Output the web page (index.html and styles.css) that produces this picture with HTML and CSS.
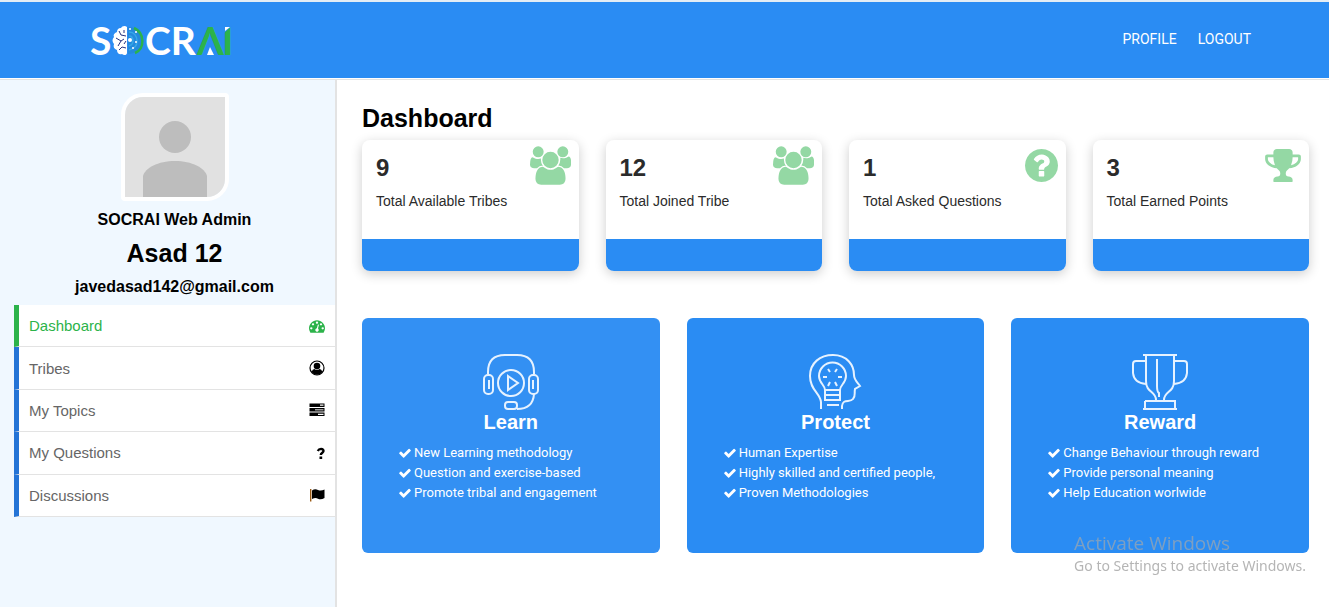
FILE: index.html
```html
<!DOCTYPE html>
<html lang="en">
<head>
<meta charset="utf-8">
<title>SOCRAI Dashboard</title>
<meta name="viewport" content="width=device-width, initial-scale=1">
<link rel="stylesheet" href="styles.css">
</head>
<body>
<svg class="sprite" aria-hidden="true">
  <symbol id="users" viewBox="-64 0 1920 1792"><path d="M529 896q-162 5-265 128h-134q-82 0-138-40.500t-56-118.500q0-353 124-353 6 0 43.500 21t97.500 42.500 119 21.500q67 0 133-23-5 37-5 66 0 159 93 292zm1071 637q0 120-73 189.500t-194 69.500h-874q-121 0-194-69.500t-73-189.500q0-53 3.500-103.500t14-109 26.500-108.500 43-97.500 62-81 85.500-53.500 111.500-20q10 0 43 21.500t73 48 107 48 135 21.500 135-21.500 107-48 73-48 43-21.500q61 0 111.500 20t85.500 53.500 62 81 43 97.500 26.500 108.500 14 109 3.500 103.500zm-1024-1277q0 106-75 181t-181 75-181-75-75-181 75-181 181-75 181 75 75 181zm704 384q0 159-112.500 271.500t-271.500 112.500-271.500-112.500-112.500-271.500 112.500-271.500 271.500-112.500 271.500 112.500 112.500 271.500zm576 225q0 78-56 118.500t-138 40.500h-134q-103-123-265-128 93-133 93-292 0-29-5-66 66 23 133 23 59 0 119-21.500t97.500-42.500 43.500-21q124 0 124 353zm-128-609q0 106-75 181t-181 75-181-75-75-181 75-181 181-75 181 75 75 181z"/></symbol>
  <symbol id="question-circle" viewBox="128 128 1536 1536"><path d="M1024 1376v-192q0-14-9-23t-23-9h-192q-14 0-23 9t-9 23v192q0 14 9 23t23 9h192q14 0 23-9t9-23zm256-672q0-88-55.500-163t-138.500-116-170-41q-243 0-371 213-15 24 8 42l132 100q7 6 19 6 16 0 25-12 53-68 86-92 34-24 86-24 48 0 85.500 26t37.500 59q0 38-20 61t-68 45q-63 28-115.500 86.500t-52.500 125.500v36q0 14 9 23t23 9h192q14 0 23-9t9-23q0-19 21.500-49.500t54.500-49.500q32-18 49-28.500t46-35 44.500-48 28-60.500 12.500-81zm384 192q0 209-103 385.500t-279.500 279.500-385.500 103-385.500-103-279.500-279.500-103-385.500 103-385.500 279.500-279.500 385.500-103 385.500 103 279.500 279.500 103 385.500z"/></symbol>
  <symbol id="trophy" viewBox="64 128 1664 1536"><path d="M522 883q-74-162-74-371h-256v96q0 78 94.500 162t235.500 113zm1078-275v-96h-256q0 209-74 371 141-29 235.500-113t94.500-162zm128-128v128q0 71-41.500 143t-112 130-173 97.500-215.500 44.500q-42 54-95 95-38 34-52.500 72.500t-14.500 89.500q0 54 30.500 91t97.500 37q75 0 133.500 45.500t58.500 114.500v64q0 14-9 23t-23 9h-832q-14 0-23-9t-9-23v-64q0-69 58.500-114.500t133.500-45.500q67 0 97.500-37t30.500-91q0-51-14.500-89.500t-52.500-72.500q-53-41-95-95-113-5-215.500-44.500t-173-97.500-112-130-41.500-143v-128q0-40 28-68t68-28h288v-96q0-66 47-113t113-47h576q66 0 113 47t47 113v96h288q40 0 68 28t28 68z"/></symbol>
  <symbol id="check" viewBox="100 100 1592 1592"><path d="M1671 566q0 40-28 68l-724 724-136 136q-28 28-68 28t-68-28l-136-136-362-362q-28-28-28-68t28-68l136-136q28-28 68-28t68 28l294 295 656-657q28-28 68-28t68 28l136 136q28 28 28 68z"/></symbol>
  <symbol id="gauge" viewBox="0 0 1792 1792"><path d="M384 1152q0-53-37.500-90.500t-90.500-37.500-90.500 37.500-37.500 90.500 37.500 90.500 90.500 37.500 90.500-37.500 37.500-90.500zm192-448q0-53-37.500-90.500t-90.500-37.500-90.500 37.500-37.500 90.500 37.500 90.500 90.500 37.500 90.500-37.500 37.500-90.500zm428 481l101-382q6-26-7.500-48.500t-38.500-29.500-48 6.500-30 39.500l-101 382q-60 5-107 43.500t-63 98.500q-20 77 20 146t117 89 146-20 89-117q16-60-6-117t-72-91zm660-33q0-53-37.500-90.500t-90.500-37.500-90.500 37.500-37.500 90.500 37.500 90.500 90.500 37.500 90.500-37.500 37.500-90.500zm-640-640q0-53-37.500-90.500t-90.500-37.500-90.500 37.500-37.500 90.500 37.500 90.500 90.500 37.500 90.500-37.500 37.500-90.500zm448 192q0-53-37.500-90.500t-90.500-37.500-90.500 37.500-37.500 90.500 37.500 90.500 90.500 37.500 90.500-37.500 37.500-90.500zm320 448q0 261-141 483-19 29-54 29h-1402q-35 0-54-29-141-221-141-483 0-182 71-348t191-286 286-191 348-71 348 71 286 191 191 286 71 348z"/></symbol>
</svg>

<header class="topbar">
  <a class="brand" href="#" aria-label="SOCRAI">
    <svg class="logo" viewBox="0 -13 146 54" aria-hidden="true">
      <text class="logo-text" x="-1" y="30">S</text>
      <g transform="translate(-1 -1)">
      <path fill="#fff" d="M37 3c-2-2-5-1-6 1-3 0-4 2-4 4-3 1-4 3-3 5-2 2-2 5 0 7-1 3 0 5 3 6 0 3 2 5 5 4 2 2 5 1 5-1z"/>
      <path fill="none" stroke="#28327f" stroke-width="1" d="M29 7l2 4 5 1M26 14l5 3 3-2M31 17l-3 5M29 26l3-3 4 1M34 6v3M36 17l-2 3"/>
      <path fill="#2489dc" d="M38 3c9 0 14 6 14 14s-6 13-14 13z"/>
      <path fill="none" stroke="#35a8e8" stroke-width="1.500" d="M39 8c5 0 8 4 8 9s-3 8-8 9M39 12c3 0 4 2 4 5s-1 4-4 5"/>
      <path fill="none" stroke="#2cb34a" stroke-width="2.500" d="M44 4c11 5 11 21 1 25"/>
      <g fill="#fff"><circle cx="40" cy="16" r="2"/><circle cx="46" cy="8" r="1"/><circle cx="46" cy="18" r="1"/><circle cx="43" cy="24" r="1"/><circle cx="40" cy="5" r="1"/></g>
      </g>
      <text class="logo-text" x="54" y="30">CR</text>
      <text class="logo-text logo-green" x="106" y="30">Λ</text>
      <path fill="#fff" d="M119 22l4 8h-7z"/>
      <text class="logo-text logo-green" x="131" y="30">I</text>
      <path fill="#2a8cf3" d="M133 1h8l-8 7z"/>
      <path fill="#fff" d="M134 2h5l-5 4z"/>
    </svg>
  </a>
  <nav class="topnav"><a href="#">PROFILE</a><a href="#">LOGOUT</a></nav>
</header>

<div class="layout">
  <aside class="sidebar">
    <svg class="avatar" viewBox="0 0 100 100" role="img" aria-label="Profile picture">
      <rect width="100" height="100" fill="#e1e1e1"/><circle cx="50" cy="40" r="16" fill="#bdbdbd"/>
      <path fill="#bdbdbd" d="M18 100V79c2-8 15-15 32-15s30 7 32 15v21z"/>
    </svg>
    <p class="role">SOCRAI Web Admin</p>
    <h2 class="name">Asad 12</h2>
    <p class="email">javedasad142@gmail.com</p>
    <nav class="menu">
      <a class="active" href="#">Dashboard<svg class="icon"><use href="#gauge"/></svg></a>
      <a href="#">Tribes<svg class="icon" viewBox="0 0 16 16"><circle cx="8" cy="8" r="7" fill="none" stroke="currentColor" stroke-width="1.200"/><circle cx="8" cy="6" r="3.300"/><path d="M2.500 12Q3.500 9 5.500 9q2.500 1.700 5 0 2 0 3 3-2 2.800-5.500 2.800T2.500 12z"/></svg></a>
      <a href="#">My Topics<svg class="icon" viewBox="0 0 16 16"><path fill-rule="evenodd" d="M.5 1.500h15v3.500H.5zM11 2.600v1.200h3.500V2.600zM.5 10.500h15V14H.5zM9 11.700v1.200h5.500v-1.200z"/><path d="M.5 6h15v3.500H.5z"/><path fill="#999" d="M6 7h8.500v1.500H6z"/></svg></a>
      <a href="#">My Questions<svg class="icon" viewBox="0 0 16 16"><path fill="none" stroke="currentColor" stroke-width="2.400" d="M8.800 6Q9.800 3.900 12 3.900q2.500.2 2.500 2.200c0 1.700-2.700 1.600-2.700 4"/><path d="M10.500 11.500h2.700V14h-2.700z"/></svg></a>
      <a href="#">Discussions<svg class="icon" viewBox="0 0 16 16"><path d="M3 3.500Q6 1.500 9 3q3 1.300 6.500-.5V11q-3.500 2-6.500.7-2.500-1.500-6 .3z"/><path fill="#9b5b16" d="M1 2h1.400v12.500H1z"/></svg></a>
    </nav>
  </aside>

  <main class="content">
    <h1>Dashboard</h1>
    <section class="stats" aria-label="Totals">
      <article class="stat"><strong>9</strong><p>Total Available Tribes</p><svg class="stat-icon wide"><use href="#users"/></svg></article>
      <article class="stat"><strong>12</strong><p>Total Joined Tribe</p><svg class="stat-icon wide"><use href="#users"/></svg></article>
      <article class="stat"><strong>1</strong><p>Total Asked Questions</p><svg class="stat-icon"><use href="#question-circle"/></svg></article>
      <article class="stat"><strong>3</strong><p>Total Earned Points</p><svg class="stat-icon cup"><use href="#trophy"/></svg></article>
    </section>
    <section class="features">
      <article class="feature learn">
        <svg class="art" viewBox="0 0 56 56"><path d="M5 20V18Q5 1 22 1H34Q51 1 51 18v2M51 40Q50 55 34 55"/><rect x="1" y="21" width="9" height="19" rx="4"/><rect x="46" y="21" width="9" height="19" rx="4"/><path d="M6 26v9M50 26v9"/><circle cx="28" cy="29" r="13"/><path d="M25 22l10 7-10 7z"/><rect x="22" y="48" width="12" height="7" rx="3"/></svg>
        <h2>Learn</h2>
        <ul><li><svg><use href="#check"/></svg>New Learning methodology</li><li><svg><use href="#check"/></svg>Question and exercise-based</li><li><svg><use href="#check"/></svg>Promote tribal and engagement</li></ul>
      </article>
      <article class="feature">
        <svg class="art" viewBox="0 0 56 56"><path d="M14 55V48C13 39 3 36 3 22 3 9 13 1 26 1c14 0 21 10 21 20 0 5 4 8 6 11l-5 3c-1 4 1 7-2 10-3 4-10-1-11 7v3M18 36c0-5-6-7-6-14a13 13 0 0 1 27 0c0 7-6 9-6 14z"/><path d="M18 36h15v5H18zM18 41h15v5H18zM20 51h12M21 15l2 3M30 15l-2 3M16 23h4M31 23h4M21 32l2-4M30 32l-2-4"/></svg>
        <h2>Protect</h2>
        <ul><li><svg><use href="#check"/></svg>Human Expertise</li><li><svg><use href="#check"/></svg>Highly skilled and certified people,</li><li><svg><use href="#check"/></svg>Proven Methodologies</li></ul>
      </article>
      <article class="feature">
        <svg class="art" viewBox="0 0 56 56"><path d="M11 1h34M14 1v26c0 12 10 10 10 19M42 1v26c0 12-10 10-10 19M14 7H4Q1 7 1 10v9q1 10 13 11M42 7h10q3 0 3 3v9q-1 10-13 11M13 47h30v8M13 47v8M11 55h34M25 5v27q0 6 2 7v4"/></svg>
        <h2>Reward</h2>
        <ul><li><svg><use href="#check"/></svg>Change Behaviour through reward</li><li><svg><use href="#check"/></svg>Provide personal meaning</li><li><svg><use href="#check"/></svg>Help Education worlwide</li></ul>
      </article>
    </section>
  </main>
</div>
<div class="watermark"><p class="watermark-title">Activate Windows</p><p>Go to Settings to activate Windows.</p></div>
</body>
</html>
```

FILE: styles.css
```css
* { box-sizing: border-box; }
body {
  margin: 0;
  min-height: 100vh;
  display: flex;
  flex-direction: column;
  background: #fff;
  color: #000;
  font-family: "Liberation Sans", Arial, sans-serif;
}
h1, h2, p, ul { margin: 0; padding: 0; }
a { text-decoration: none; }
.sprite { position: absolute; width: 0; height: 0; }

.topbar {
  display: flex;
  align-items: center;
  justify-content: space-between;
  padding: 10px 78px 12px 91px;
  background: #2a8cf3;
  border-top: 2px solid #e3edf5;
}
.brand { display: flex; }
.logo { width: 146px; height: 54px; overflow: visible; }
.logo-text { font: 700 39px Lato, sans-serif; fill: #fff; }
.logo-green { fill: #2cb34a; }
.topnav { display: flex; gap: 21px; font: 14px/20px Roboto, sans-serif; }
.topnav a { color: #fff; }

.layout {
  flex: 1;
  display: flex;
  margin-top: 1px;
  border-top: 1px solid #e3e3e3;
}
.sidebar {
  flex: 0 0 337px;
  padding: 13px 0 0 14px;
  background: #f0f8ff;
  border-right: 2px solid #e3e3e3;
  text-align: center;
}
.avatar {
  display: block;
  width: 108px;
  height: 108px;
  margin: 0 auto;
  border: 4px solid #fff;
  border-radius: 22px 4px;
}
.role, .email { font-size: 16px; line-height: 20px; font-weight: 700; }
.role { margin-top: 9px; }
.name { margin: 8px 0 9px; font-size: 25px; line-height: 30px; }
.menu {
  display: grid;
  grid-auto-rows: 1fr;
  min-height: 212px;
  margin-top: 8px;
  text-align: left;
}
.menu a {
  display: flex;
  align-items: center;
  justify-content: space-between;
  padding: 0 10px;
  background: #fff;
  border-left: 5px solid #2474d6;
  border-bottom: 1px solid #e3e3e3;
  color: #666;
  font-size: 15px;
}
.menu .active { color: #2cb34a; border-left-color: #2cb34a; }
.icon { width: 16px; height: 16px; fill: currentColor; color: #000; }
.active .icon { color: #2cb34a; }

.content { flex: 1; min-width: 0; padding: 23px 20px 20px 25px; }
h1 { font-size: 25px; line-height: 30px; }
.stats {
  display: grid;
  grid-template-columns: repeat(4, 1fr);
  gap: 27px;
  margin-top: 7px;
}
.stat {
  position: relative;
  min-height: 131px;
  padding: 14px;
  border-bottom: 32px solid #2a8cf3;
  border-radius: 8px;
  box-shadow: 0 3px 12px rgba(0, 0, 0, 0.2);
  color: #2b2b2b;
}
.stat strong { display: block; font-size: 24px; line-height: 28px; }
.stat p { margin-top: 9px; font-size: 14px; line-height: 20px; }
.stat-icon {
  position: absolute;
  top: 9px;
  right: 8px;
  width: 33px;
  height: 33px;
  fill: #94d8a4;
}
.stat-icon.wide { top: 6px; width: 41px; height: 39px; }
.stat-icon.cup { width: 36px; }

.features {
  display: grid;
  grid-template-columns: repeat(3, 1fr);
  gap: 27px;
  margin-top: 47px;
}
.feature {
  min-height: 235px;
  padding: 36px 37px 20px 37px;
  background: #2a8cf3;
  border-radius: 6px;
  color: #fff;
}
.feature.learn { background: #3390f3; }
.art {
  display: block;
  width: 56px;
  height: 56px;
  margin: 0 auto;
  fill: none;
  stroke: #e6f2ff;
  stroke-width: 2;
}
.feature h2 { font-size: 20px; line-height: 24px; text-align: center; }
.feature ul {
  margin-top: 9px;
  list-style: none;
  font: 13px/20px Roboto, sans-serif;
  white-space: nowrap;
}
.feature li { display: flex; align-items: center; gap: 3px; }
.feature li svg { width: 12px; height: 12px; fill: #fff; }

.watermark {
  position: fixed;
  right: 23px;
  bottom: 31px;
  color: #b5b5b5;
  font: 14px/20px "Noto Sans", "Open Sans", sans-serif;
  pointer-events: none;
}
.watermark-title { font: 19px/26px "Open Sans", sans-serif; color: #7d9fc2; }
```
